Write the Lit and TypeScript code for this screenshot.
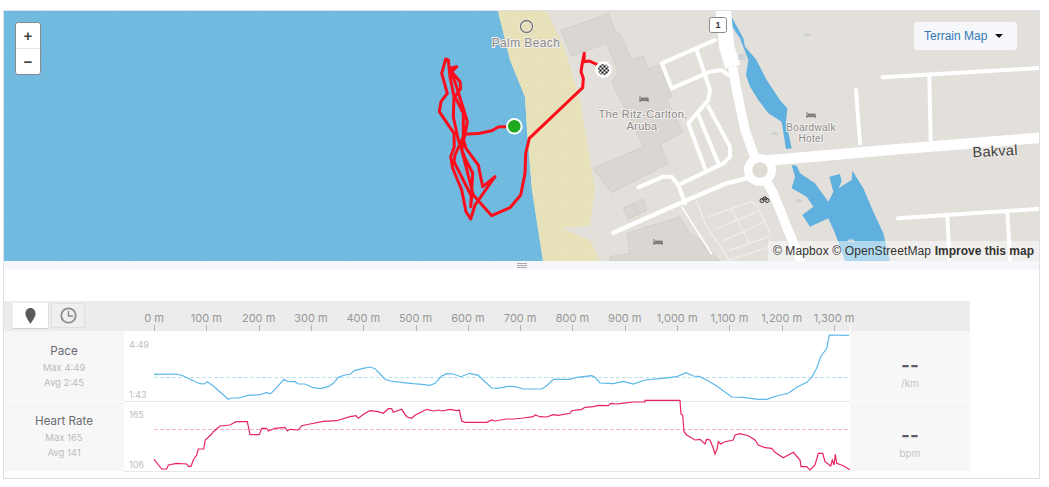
import { LitElement, html, css, svg } from "lit";
import { customElement } from "lit/decorators.js";

type P = [number, number];
const toPage = (ox: number, oy: number, pts: P[]) =>
  pts.map(([x, y]) => `${(ox + x / 3).toFixed(1)},${(oy + y / 3).toFixed(1)}`).join(" ");

const pace = [
  toPage(0, 290, [[462,253],[530,252],[550,258],[575,270],[600,281],[612,282],[622,275],[640,288],[685,328],[695,324],[715,324],[745,316],[780,314],[798,308],[812,311],[825,298],[852,268],[862,274],[885,275],[895,282],[915,282],[940,293],[960,296],[985,290],[1000,280],[1015,262],[1035,255],[1050,253]]),
  toPage(350, 290, [[15,241],[40,235],[60,231],[75,236],[90,252],[105,268],[120,273],[160,278],[190,281],[215,283],[240,286],[255,280],[275,258],[290,251],[310,252],[332,260],[360,250],[385,256],[405,275],[425,294],[440,295],[475,289],[495,290],[520,297],[575,297],[590,287],[610,268],[660,268],[680,262],[725,257],[735,262],[750,279],[790,281],[820,274],[850,282],[885,270],[930,266],[980,260],[1008,248],[1030,258],[1050,260]]),
  toPage(700, 290, [[20,270],[50,288],[95,321],[130,322],[175,328],[200,328],[230,318],[265,310],[290,292],[320,277],[335,262],[350,235],[362,200],[380,175],[388,135],[447,136]]),
].join(" ");

const hr = [
  toPage(0, 290, [[462,508],[485,537],[500,537],[505,525],[530,520],[560,522],[565,529],[573,529],[580,510],[590,495],[595,477],[611,477],[616,450],[635,432],[640,425],[660,408],[690,405],[708,395],[742,395],[750,434],[778,434],[785,415],[800,415],[805,423],[825,415],[855,412],[862,423],[870,418],[895,420],[905,407],[930,402],[970,394],[1010,392],[1050,380]]),
  toPage(350, 290, [[18,377],[25,385],[45,370],[60,362],[85,365],[100,370],[115,356],[125,356],[130,367],[155,358],[170,380],[185,385],[195,376],[230,358],[250,363],[265,360],[275,363],[300,358],[320,362],[328,360],[335,393],[345,397],[410,397],[425,390],[435,393],[470,387],[490,387],[520,384],[550,380],[555,375],[570,380],[590,381],[610,374],[625,376],[660,370],[665,362],[695,358],[705,352],[730,350],[745,346],[775,347],[782,340],[800,342],[815,340],[850,336],[885,336],[885,331],[990,331],[993,372],[998,375],[1002,425],[1010,435],[1035,450],[1050,448]]),
  toPage(700, 290, [[15,462],[20,448],[30,450],[40,475],[45,492],[52,475],[55,455],[62,462],[75,455],[100,450],[105,435],[120,431],[145,437],[165,450],[175,465],[195,473],[215,475],[225,487],[250,503],[280,487],[300,510],[303,530],[320,530],[330,540],[345,525],[355,490],[368,490],[375,515],[392,528],[397,510],[402,525],[406,493],[410,520],[430,527],[450,539]]),
].join(" ");

const route = toPage(430, 40, [
  [253,259],[205,261],[185,272],[150,280],[105,283],[100,300],[108,325],[130,355],[145,375],[158,440],[195,410],[135,495],[122,537],[108,515],[95,450],[68,385],[62,350],[73,320],[72,280],[28,215],[33,185],[52,160],[35,100],[47,57],[55,60],[60,110],[72,170],[70,230],[85,300],[105,355],[128,400],[122,500],[125,470],[72,365],[75,345],[100,290],[100,220],[75,170],[92,145],[90,125],[65,95],[80,80],[60,85],[78,135],[100,205],[112,245],[105,283],[95,330],[130,465],[185,527],[240,503],[272,465],[285,400],[287,340],[298,295],[458,143],[460,115],[453,95],[457,70],[463,40],[462,65],[478,63],[500,73],
]);

const ticks = ["0 m","100 m","200 m","300 m","400 m","500 m","600 m","700 m","800 m","900 m","1,000 m","1,100 m","1,200 m","1,300 m"];

const bed = (x: number, y: number) => svg`<g transform="translate(${x},${y})" fill="#77777a">
  <rect x="-4.5" y="-3" width="1" height="6"></rect><rect x="-4.5" y="0.5" width="9" height="1.6"></rect>
  <rect x="-3" y="-1.4" width="7.5" height="2"></rect><rect x="3.6" y="0" width="1" height="3"></rect></g>`;

const crown = (x: number, y: number) => svg`<path transform="translate(${x},${y})" fill="#cbd2d6" d="M-4 2 L-2.4 -1 L-1 0.2 L0 -2.4 L1 0.2 L2.4 -1 L4 2 Z"></path>`;

@customElement("app-root")
export class AppRoot extends LitElement {
  static styles = css`
    :host { display: block; padding: 10px 9px 0 3px; font-family: Inter, "Liberation Sans", sans-serif; background: #fff; }
    .frame { border: 1px solid #dfdfe6; height: 467px; box-sizing: content-box; }
    .map { position: relative; height: 250px; overflow: hidden; background: #70b9df; }
    .canvas { display: block; width: 1035px; height: 250px; }
    .label { font: 12px "Liberation Sans", sans-serif; fill: #8b8b8b; text-anchor: middle; stroke: #f2efec; stroke-width: 2px; paint-order: stroke; letter-spacing: .4px; }
    .poi { font: 11px "Liberation Sans", sans-serif; fill: #8b8b8b; text-anchor: middle; stroke: #f2efec; stroke-width: 2px; paint-order: stroke; letter-spacing: .35px; }
    .poi.small { font-size: 10px; letter-spacing: .3px; }
    .street { font: 14.5px "Liberation Sans", sans-serif; fill: #3e3e40; text-anchor: middle; stroke: #eeeae6; stroke-width: 2px; paint-order: stroke; letter-spacing: .3px; }
    .shield { font: bold 9px "Liberation Sans", sans-serif; fill: #333; text-anchor: middle; }
    .zoom { position: absolute; left: 11px; top: 11px; width: 26px; box-sizing: border-box; border: 1px solid #8a8a8a; border-radius: 3px; background: #fff; overflow: hidden; }
    .zoom div { height: 25px; display: flex; align-items: center; justify-content: center; font: bold 15px "Liberation Sans", sans-serif; color: #444; }
    .zoom div + div { border-top: 1px solid #e6e6e6; height: 26px; box-sizing: border-box; }
    .layer { position: absolute; left: 910px; top: 11px; width: 103px; height: 28px; border-radius: 3px; background: #f6f7fa; display: flex; align-items: center; gap: 8px; padding-left: 10px; box-sizing: border-box; color: #337ab7; font: 12px "Liberation Sans", sans-serif; }
    .caret { width: 0; height: 0; border-left: 4px solid transparent; border-right: 4px solid transparent; border-top: 4px solid #111; }
    .attr { position: absolute; right: 0; bottom: 0; height: 20px; width: 271px; box-sizing: border-box; padding-right: 5px; display: flex; align-items: center; justify-content: flex-end; gap: 3.5px; background: rgba(255,255,255,.5); color: #333; font: 12px "Liberation Sans", sans-serif; white-space: nowrap; }
    .attr span { letter-spacing: .13px; }
    .attr b { color: #333; }
    .handle { height: 9px; background: #f6f7fa; display: flex; flex-direction: column; align-items: center; justify-content: center; gap: 1px; }
    .handle i { display: block; width: 10px; height: 1px; background: #a9a9ad; }
    .chart { width: 966px; margin-top: 31px; }
    .header { height: 30px; background: #ececec; display: flex; position: relative; }
    .axis { display: block; width: 966px; height: 30px; }
    .tick { font: 11px Inter, "Liberation Sans", sans-serif; fill: #979797; text-anchor: middle; }
    .toggle { position: absolute; left: 9px; top: 2px; display: flex; gap: 2px; align-items: flex-start; }
    .tbtn { height: 26px; width: 36px; box-sizing: border-box; display: flex; align-items: center; justify-content: center; background: #fff; border-bottom: 1px solid #cfcfcf; border-right: 1px solid #e2e2e2; }
    .tbtn.off { width: 34px; height: 25px; background: #efefef; border: 1px solid #e0e0e0; }
    .row { display: grid; grid-template-columns: 120px 726px 120px; }
    .row.a { height: 70px; }
    .row.b { height: 69px; margin-top: 1px; }
    .side { background: #f7f7f7; display: flex; flex-direction: column; align-items: center; justify-content: center; }
    .side.val { padding-top: 9px; box-sizing: border-box; }
    .name { font-size: 11.6px; color: #6a6a72; line-height: 15px; }
    .sub { font-size: 9.5px; color: #bcbcbc; line-height: 15px; position: relative; top: 1px; }
    .dash { font-size: 19px; font-weight: 700; color: #5e5e62; line-height: 19px; margin-top: 4px; }
    .unit { font-size: 10px; color: #c4c4c4; line-height: 14px; margin-top: 1px; }
    .plot { display: block; width: 726px; overflow: visible; }
    .ylab { font: 9px Inter, "Liberation Sans", sans-serif; fill: #bdbdbd; }
  `;

  render() {
    return html`<div class="frame">
      <div class="map">
        <svg class="canvas" viewBox="4 11 1035 250">
          <defs>
            <pattern id="ripple" width="9" height="7" patternUnits="userSpaceOnUse">
              <rect width="9" height="7" fill="#70b9df"></rect>
              <rect x="1" y="1" width="1" height="1" fill="#80c2e5"></rect>
              <rect x="5" y="3" width="1" height="1" fill="#7bbfe3"></rect>
              <rect x="3" y="5" width="1" height="1" fill="#68b4dc"></rect>
              <rect x="7" y="6" width="1" height="1" fill="#80c2e5"></rect>
            </pattern>
            <pattern id="sand" width="6" height="6" patternUnits="userSpaceOnUse">
              <rect width="6" height="6" fill="#e8e2ba"></rect>
              <rect x="1" y="1" width="1" height="1" fill="#ddd7ae"></rect>
              <rect x="4" y="4" width="1" height="1" fill="#ddd7ae"></rect>
            </pattern>
            <pattern id="check" width="4" height="4" patternUnits="userSpaceOnUse" patternTransform="translate(601.5 67.5)">
              <rect width="4" height="4" fill="#fff"></rect>
              <rect width="2" height="2" fill="#111"></rect>
              <rect x="2" y="2" width="2" height="2" fill="#111"></rect>
            </pattern>
          </defs>
          <rect x="4" y="11" width="1035" height="250" fill="url(#ripple)"></rect>
          <path fill="#e3dfdb" d="M498 11 H1039 V261 H543 L532 190 L527 130 L525 97 L510 60 Z"></path>
          <path fill="url(#sand)" d="M498 11 H547 L565 50 L580 100 L595 190 L590 225 L600 261 H543 L532 190 L527 130 L525 97 L510 60 Z"></path>
          <path fill="#e3dfdb" d="M561 228 L590 226 L600 261 L590 240 Z"></path>

          <g transform="translate(350,0) scale(.33333)" fill="#dad6d1" stroke="#cbc7c1" stroke-width="2">
            <path d="M632 92 L775 40 L795 95 L810 100 L845 180 L880 168 L895 205 L930 195 L965 290 L950 300 L998 395 L930 435 L955 490 L785 578 L730 505 L880 440 L785 245 L805 215 L770 130 L665 168 Z"></path>
            <path d="M820 625 L880 597 L890 630 L835 658 Z M850 612 L865 645"></path>
            <path d="M830 700 L990 650 L1020 700 L1050 720 L1110 783 L780 783 L780 770 L840 760 Z"></path>
          </g>

          <g transform="translate(700,0) scale(.33333)" fill="#5fb0de">
            <path d="M65 33 L85 33 L130 115 L135 140 L168 178 L200 240 L240 300 L262 325 L258 365 L275 445 L258 447 L245 365 L205 340 L175 300 L150 260 L138 225 L145 180 L120 115 Z"></path>
            <path d="M275 495 L290 497 L300 520 L345 550 L385 605 L400 575 L388 530 L420 522 L425 545 L415 565 L455 540 L457 512 L490 565 L520 635 L550 700 L570 783 L435 783 L405 700 L385 655 L330 680 L307 645 L340 620 L320 590 L275 565 L285 530 Z"></path>
          </g>

          <g transform="translate(610,30) scale(.33333)" fill="none" stroke="#fff" stroke-linecap="round" stroke-linejoin="round">
            <path stroke-width="46" stroke-linecap="butt" d="M340 -60 L350 50 L368 110"></path>
            <path stroke-width="28" stroke-linecap="butt" d="M368 110 L378 170 L405 300 L430 370 L450 420 L490 490 L530 590 L580 710"></path>
            <path stroke-width="12" d="M315 30 L155 100 L185 175 L300 125 L335 120 L355 135"></path>
            <path stroke-width="12" d="M260 60 L300 180 L295 210 L235 280 L285 415"></path>
            <path stroke-width="12" d="M265 255 L325 400"></path>
            <path stroke-width="12" d="M295 230 L360 350 L360 380 L340 400 L215 460"></path>
            <path stroke-width="12" d="M85 472 L160 440 L185 440 L205 465 L225 520"></path>
            <path stroke-width="13" d="M10 608 L220 515 L350 460 L430 440"></path>
            <path stroke-width="5" d="M215 530 L305 672"></path>
            <path stroke-width="4" stroke="#f1eeea" d="M260 515 L290 590 L360 693 M295 560 L425 515 L440 525 L480 610 M310 600 L440 545 M340 632 L465 575 M360 660 L475 620 M360 690 L480 650 M365 540 L420 640"></path>
            <circle cx="450" cy="420" r="48" fill="#fff" stroke="none"></circle>
          </g>
          <g transform="translate(700,0) scale(.33333)" fill="none" stroke="#fff" stroke-linecap="round">
            <path stroke-width="32" stroke-linecap="butt" d="M200 482 L600 447 L1040 412"></path>
            <path stroke-width="12" d="M548 232 L1040 203 M468 270 L480 430 M688 232 L692 420 M594 655 L1040 625 M742 652 L750 800 M922 640 L932 800"></path>
            <circle cx="180" cy="510" r="23" fill="#e0dbd4" stroke="none"></circle>
          </g>

          ${crown(742, 55)} ${crown(742, 58)} ${crown(807, 34)} ${crown(775, 133)} ${crown(799, 200)} ${crown(851, 240)}
          ${bed(644, 99)} ${bed(811, 115)} ${bed(658, 242)}
          <circle cx="526.5" cy="26.5" r="6" fill="none" stroke="#f2efe0" stroke-width="3"></circle>
          <circle cx="526.5" cy="26.5" r="6" fill="none" stroke="#77777a" stroke-width="1.4"></circle>
          <text class="label" x="526" y="47">Palm Beach</text>
          <text class="poi" x="643" y="118">The Ritz-Carlton,</text>
          <text class="poi" x="642" y="129.5">Aruba</text>
          <text class="poi small" x="811" y="131">Boardwalk</text>
          <text class="poi small" x="811" y="141.5">Hotel</text>
          <text class="street" x="995" y="156" transform="rotate(-3 995 150)">Bakval</text>
          <rect x="709.5" y="17.5" width="17" height="15" rx="2" fill="#fff" stroke="#8b8b8b"></rect>
          <text class="shield" x="718" y="28">1</text>
          <g transform="translate(764.5,199.5)" fill="none" stroke="#333" stroke-width="1">
            <circle cx="-2.5" cy="1" r="2"></circle><circle cx="2.5" cy="1" r="2"></circle><path d="M-2.5 1 L-1 -2.5 L1.5 -2.5 L2.5 1 M-1 1 L1 -2"></path>
          </g>

          <polyline points=${route} fill="none" stroke="#fb0d1c" stroke-width="3" stroke-linejoin="round" stroke-linecap="round"></polyline>
          <circle cx="514.3" cy="126.3" r="7.3" fill="#1ea91e" stroke="#fff" stroke-width="2"></circle>
          <circle cx="603.5" cy="69.5" r="8.3" fill="#fff"></circle>
          <circle cx="603.5" cy="69.5" r="5.6" fill="url(#check)"></circle>
        </svg>
        <div class="zoom"><div>+</div><div>−</div></div>
        <div class="layer">Terrain Map <span class="caret"></span></div>
        <div class="attr"><span>© Mapbox</span><span>© OpenStreetMap</span><b>Improve this map</b></div>
      </div>
      <div class="handle"><i></i><i></i><i></i></div>
      <div class="chart">
        <div class="header">
          <svg class="axis" viewBox="4 301 966 30">
            ${ticks.map((t, i) => {
              const x = 154 + i * 52.31;
              return svg`<text class="tick" x=${x} y="322">${t}</text><rect x=${Math.round(x)} y="325" width="1" height="6" fill="#b5b5b5"></rect>`;
            })}
            <rect x="850" y="325" width="1" height="6" fill="#fff"></rect>
          </svg>
          <div class="toggle">
            <div class="tbtn">
              <svg width="11" height="16" viewBox="0 0 13 17" preserveAspectRatio="none"><path fill="#5a5a5a" d="M6.5 0 C10 0 12.5 2.6 12.5 6 C12.5 9.5 8.5 13.5 6.5 17 C4.5 13.5 .5 9.5 .5 6 C.5 2.6 3 0 6.5 0 Z"></path></svg>
            </div>
            <div class="tbtn off">
              <svg width="17" height="17" viewBox="0 0 17 17" fill="none" stroke="#8c8c8c"><circle cx="8.5" cy="8.5" r="7.2" stroke-width="1.8"></circle><path stroke-width="1.5" d="M8.5 3.8 V9 H13"></path></svg>
            </div>
          </div>
        </div>
        <div class="row a">
          <div class="side"><div class="name">Pace</div><div class="sub">Max 4:49</div><div class="sub">Avg 2:45</div></div>
          <svg class="plot" height="70" viewBox="124 331 726 70">
            <line x1="154" x2="850" y1="377.5" y2="377.5" stroke="#bfe3ee" stroke-dasharray="4 2"></line>
            <rect x="124" y="401" width="726" height="1" fill="#e8e8e8"></rect>
            <text class="ylab" x="129" y="347.5">4:49</text>
            <text class="ylab" x="129" y="397.5">1:43</text>
            <polyline points=${pace} fill="none" stroke="#5bb7e8" stroke-width="1.2"></polyline>
          </svg>
          <div class="side val"><div class="dash">--</div><div class="unit">/km</div></div>
        </div>
        <div class="row b">
          <div class="side"><div class="name">Heart Rate</div><div class="sub">Max 165</div><div class="sub">Avg 141</div></div>
          <svg class="plot" height="69" viewBox="124 402 726 69">
            <line x1="154" x2="850" y1="429.5" y2="429.5" stroke="#f4b5c8" stroke-dasharray="4 2"></line>
            <rect x="124" y="471" width="726" height="1" fill="#e8e8e8"></rect>
            <text class="ylab" x="129" y="417.5">165</text>
            <text class="ylab" x="129" y="467.5">106</text>
            <polyline points=${hr} fill="none" stroke="#e6255c" stroke-width="1.2"></polyline>
          </svg>
          <div class="side val"><div class="dash">--</div><div class="unit">bpm</div></div>
        </div>
      </div>
    </div>`;
  }
}
